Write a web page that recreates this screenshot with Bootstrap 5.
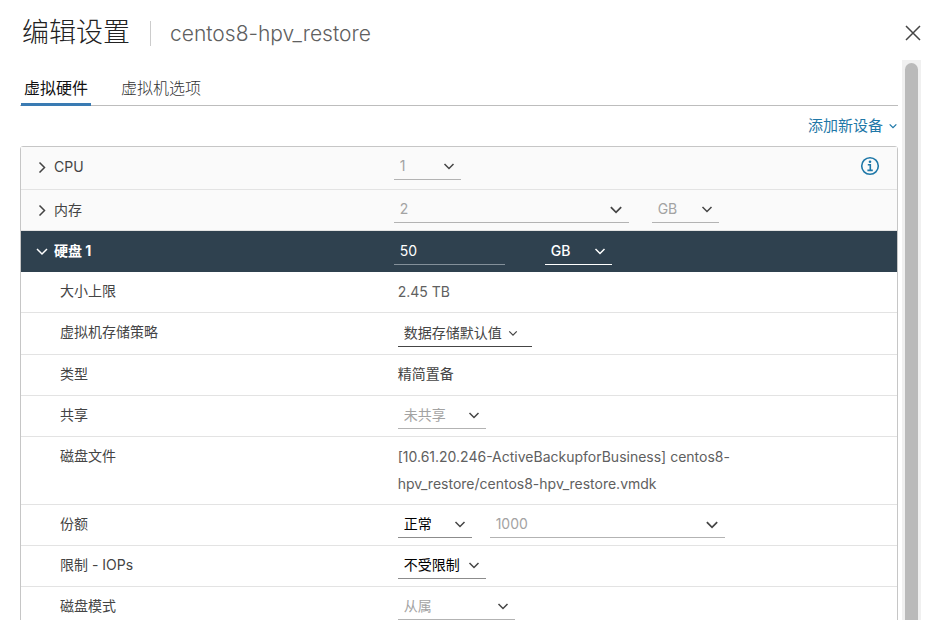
<!DOCTYPE html>
<html lang="zh-CN">
<head>
<meta charset="utf-8">
<meta name="viewport" content="width=device-width, initial-scale=1">
<title>编辑设置</title>
<link href="https://cdn.jsdelivr.net/npm/bootstrap@5.3.0/dist/css/bootstrap.min.css" rel="stylesheet">
<style>
  body { font-family: Inter, "Noto Sans CJK SC", sans-serif; font-size: 14px; line-height: 27px; color: #606060; background: #fff; }
  svg { fill: none; stroke: currentColor; }
  .dlg-head { height: 60px; padding: 6px 9px 0 22px; }
  .dlg-title { font-size: 27px; line-height: 54px; font-weight: 300; color: #222; }
  .dlg-sep { width: 1px; height: 25px; margin: 0 19px 0 20px; background: #ccc; }
  .dlg-vm { font-size: 21px; font-weight: 300; color: #606060; }
  .dlg-close { width: 16px; height: 16px; color: #454545; }
  .dlg-main { padding-left: 20px; }
  .cfg-tabs { height: 46px; padding: 14px 0 0 1px; gap: 27px; border-bottom: 1px solid #bdbdbd; }
  .cfg-tabs button { height: 32px; padding: 0 3px; border-radius: 0; font-size: 16px; line-height: 27px; font-weight: 300; color: #333; border: 0; border-bottom: 3px solid transparent; }
  .cfg-tabs button.active { font-weight: 400; color: #111; border-bottom-color: #3a7bb3; }
  .add-bar { height: 40px; }
  .add-bar .btn { font-size: 15px; line-height: 20px; color: #1f78a8; gap: 5px; }
  .cfg-list { border: 1px solid #c6c6c6; border-radius: 3px 3px 0 0; }
  .cfg-row { min-height: 41px; padding: 6px 0; border-bottom: 1px solid #e3e3e3; }
  .cfg-row.device { background: #fafafa; }
  .cfg-row.open { background: #2f414f; border-color: #2f414f; color: #fff; }
  .cfg-row.tall { min-height: 42px; }
  .cfg-row.first { min-height: 43px; }
  .row-name { flex: 0 0 43%; padding-left: 39px; line-height: 25px; font-size: 14px; color: #444; }
  .device .row-name, .open .row-name { flex-basis: calc(43% - 4px); padding-left: 15px; }
  .open .row-name { color: #fff; }
  .row-name button { font-size: inherit; line-height: 27px; color: inherit; gap: 6px; }
  .row-name .caret { width: 12px; height: 12px; }
  .path-text { max-width: 360px; padding-bottom: 1px; }
  .cjk { line-height: 25px; color: #444; }
  .info-btn { width: 20px; height: 20px; margin: 3px 17px 0 0; color: #1f78a8; }
  .line-select, .line-combo { height: 27px; padding: 0 6px; border: 0; border-bottom: 1px solid #b3b3b3; border-radius: 0; background-color: transparent; font-size: 14px; line-height: 26px; color: #000; }
  .line-select { --bs-form-select-bg-img: url("data:image/svg+xml,%3Csvg xmlns='http://www.w3.org/2000/svg' viewBox='0 0 12 12'%3E%3Cpath fill='none' stroke='%23454545' stroke-width='1.5' d='M1.5 4 6 8.5 10.5 4'/%3E%3C/svg%3E"); background-position: right 6px center; background-size: 12px 12px; }
  .line-select.dark-line { border-color: #8c8c8c; }
  .line-select:disabled, .line-combo.off { background-color: transparent; color: #a3a3a3; opacity: 1; }
  .line-select.light-line { border-color: #fff; color: #fff; --bs-form-select-bg-img: url("data:image/svg+xml,%3Csvg xmlns='http://www.w3.org/2000/svg' viewBox='0 0 12 12'%3E%3Cpath fill='none' stroke='%23ffffff' stroke-width='1.5' d='M1.5 4 6 8.5 10.5 4'/%3E%3C/svg%3E"); }
  .line-select.policy { height: 28px; border-color: #454545; color: #454545; background-size: 10px 10px; background-position: right 14px center; }
  .line-combo input { color: inherit; background: transparent; border: 0; padding: 0; }
  .line-combo svg { width: 15px; height: 15px; color: #454545; }
  .open .line-combo { border-color: #84909a; color: #fff; }
  .open .line-combo, .open .line-select { height: 28px; font-weight: 500; }
  .w-67 { width: 67px; } .w-74 { width: 74px; } .w-88 { width: 88px; } .w-111 { width: 111px; }
  .w-117 { width: 117px; } .w-134 { width: 134px; } .w-235 { width: 235px; }
  .gap-unit { gap: 23px; } .gap-size { gap: 40px; } .gap-share { gap: 18px; }
  .scroll-track { width: 19px; margin: 0 9px 0 4px; padding: 3px 3px 0; background: #f0f0f0; }
  .scroll-thumb { border-radius: 7px 7px 0 0; background: #bababa; }
</style>
<script src="https://cdn.jsdelivr.net/npm/bootstrap@5.3.0/dist/js/bootstrap.bundle.min.js"></script>
</head>
<body>
<div class="vh-100 d-flex flex-column overflow-hidden">
  <header class="dlg-head d-flex align-items-center flex-shrink-0">
    <h1 class="dlg-title m-0">编辑设置</h1>
    <span class="dlg-sep"></span>
    <span class="dlg-vm">centos8-hpv_restore</span>
    <button type="button" class="dlg-close btn p-0 border-0 ms-auto d-flex" aria-label="关闭"><svg width="16" height="16" viewBox="0 0 16 16" stroke-width="1.5"><path d="M1 1 15 15M15 1 1 15"/></svg></button>
  </header>
  <div class="d-flex flex-grow-1 overflow-hidden">
    <main class="dlg-main flex-grow-1">
      <div class="cfg-tabs d-flex" role="tablist">
        <button type="button" class="btn active" role="tab" aria-selected="true">虚拟硬件</button>
        <button type="button" class="btn" role="tab" aria-selected="false">虚拟机选项</button>
      </div>
      <div class="add-bar d-flex justify-content-end align-items-center">
        <button type="button" class="btn p-0 border-0 d-flex align-items-center">添加新设备 <svg width="10" height="10" viewBox="0 0 12 12" stroke-width="1.5"><path d="M2 4 6 8 10 4"/></svg></button>
      </div>
      <div class="cfg-list">
        <div class="cfg-row device first d-flex align-items-start">
          <div class="row-name"><button type="button" class="btn p-0 border-0 d-flex align-items-center" aria-expanded="false"><svg class="caret" viewBox="0 0 12 12" stroke-width="1.5"><path d="M3.5 1.5 8.5 6.5 3.5 11.5"/></svg><span>CPU</span></button></div>
          <select class="form-select line-select w-67" aria-label="CPU" disabled><option>1</option></select>
          <button type="button" class="info-btn btn p-0 border-0 ms-auto d-flex" aria-label="信息"><svg width="20" height="20" viewBox="0 0 20 20" stroke-width="1.6"><circle cx="10" cy="10" r="8.3"/><circle cx="10" cy="5.8" r="1.3" fill="currentColor" stroke="none"/><path d="M7.8 8.8h2.5v5.4M7.4 14.4h5.4"/></svg></button>
        </div>
        <div class="cfg-row device d-flex align-items-start">
          <div class="row-name"><button type="button" class="btn p-0 border-0 d-flex align-items-center" aria-expanded="false"><svg class="caret" viewBox="0 0 12 12" stroke-width="1.5"><path d="M3.5 1.5 8.5 6.5 3.5 11.5"/></svg><span>内存</span></button></div>
          <div class="d-flex gap-unit">
            <div class="line-combo off w-235 d-flex align-items-center"><input class="flex-grow-1 w-100" type="text" value="2" aria-label="内存" disabled><svg viewBox="0 0 15 15" stroke-width="1.9"><path d="M2 5 7.5 10.5 13 5"/></svg></div>
            <select class="form-select line-select w-67" aria-label="内存单位" disabled><option>GB</option></select>
          </div>
        </div>
        <div class="cfg-row open d-flex align-items-start">
          <div class="row-name"><button type="button" class="btn p-0 border-0 d-flex align-items-center fw-bold" aria-expanded="true"><svg class="caret" viewBox="0 0 12 12" stroke-width="1.5"><path d="M1 4 6 9 11 4"/></svg><span>硬盘 1</span></button></div>
          <div class="d-flex gap-size">
            <div class="line-combo w-111 d-flex"><input class="w-100" type="text" value="50" aria-label="硬盘 1"></div>
            <select class="form-select line-select light-line w-67" aria-label="硬盘单位"><option>GB</option></select>
          </div>
        </div>
        <div class="cfg-row d-flex align-items-start"><div class="row-name">大小上限</div><div>2.45 TB</div></div>
        <div class="cfg-row d-flex align-items-start tall"><label class="row-name" for="policy">虚拟机存储策略</label><select id="policy" class="form-select line-select policy w-134"><option>数据存储默认值</option></select></div>
        <div class="cfg-row d-flex align-items-start"><div class="row-name">类型</div><div class="cjk">精简置备</div></div>
        <div class="cfg-row d-flex align-items-start"><label class="row-name" for="sharing">共享</label><select id="sharing" class="form-select line-select w-88" disabled><option>未共享</option></select></div>
        <div class="cfg-row d-flex align-items-start"><div class="row-name">磁盘文件</div><div class="path-text">[10.61.20.246-ActiveBackupforBusiness] centos8-hpv_restore/centos8-hpv_restore.vmdk</div></div>
        <div class="cfg-row d-flex align-items-start"><label class="row-name" for="shares">份额</label>
          <div class="d-flex gap-share">
            <select id="shares" class="form-select line-select dark-line w-74"><option>正常</option></select>
            <div class="line-combo off w-235 d-flex align-items-center"><input class="flex-grow-1 w-100" type="text" value="1000" aria-label="份额值" disabled><svg viewBox="0 0 15 15" stroke-width="1.9"><path d="M2 5 7.5 10.5 13 5"/></svg></div>
          </div>
        </div>
        <div class="cfg-row d-flex align-items-start"><label class="row-name" for="iops">限制 - IOPs</label><select id="iops" class="form-select line-select dark-line w-88"><option>不受限制</option></select></div>
        <div class="cfg-row d-flex align-items-start"><label class="row-name" for="mode">磁盘模式</label><select id="mode" class="form-select line-select w-117" disabled><option>从属</option></select></div>
      </div>
    </main>
    <div class="scroll-track flex-shrink-0"><div class="scroll-thumb h-100"></div></div>
  </div>
</div>
</body>
</html>
